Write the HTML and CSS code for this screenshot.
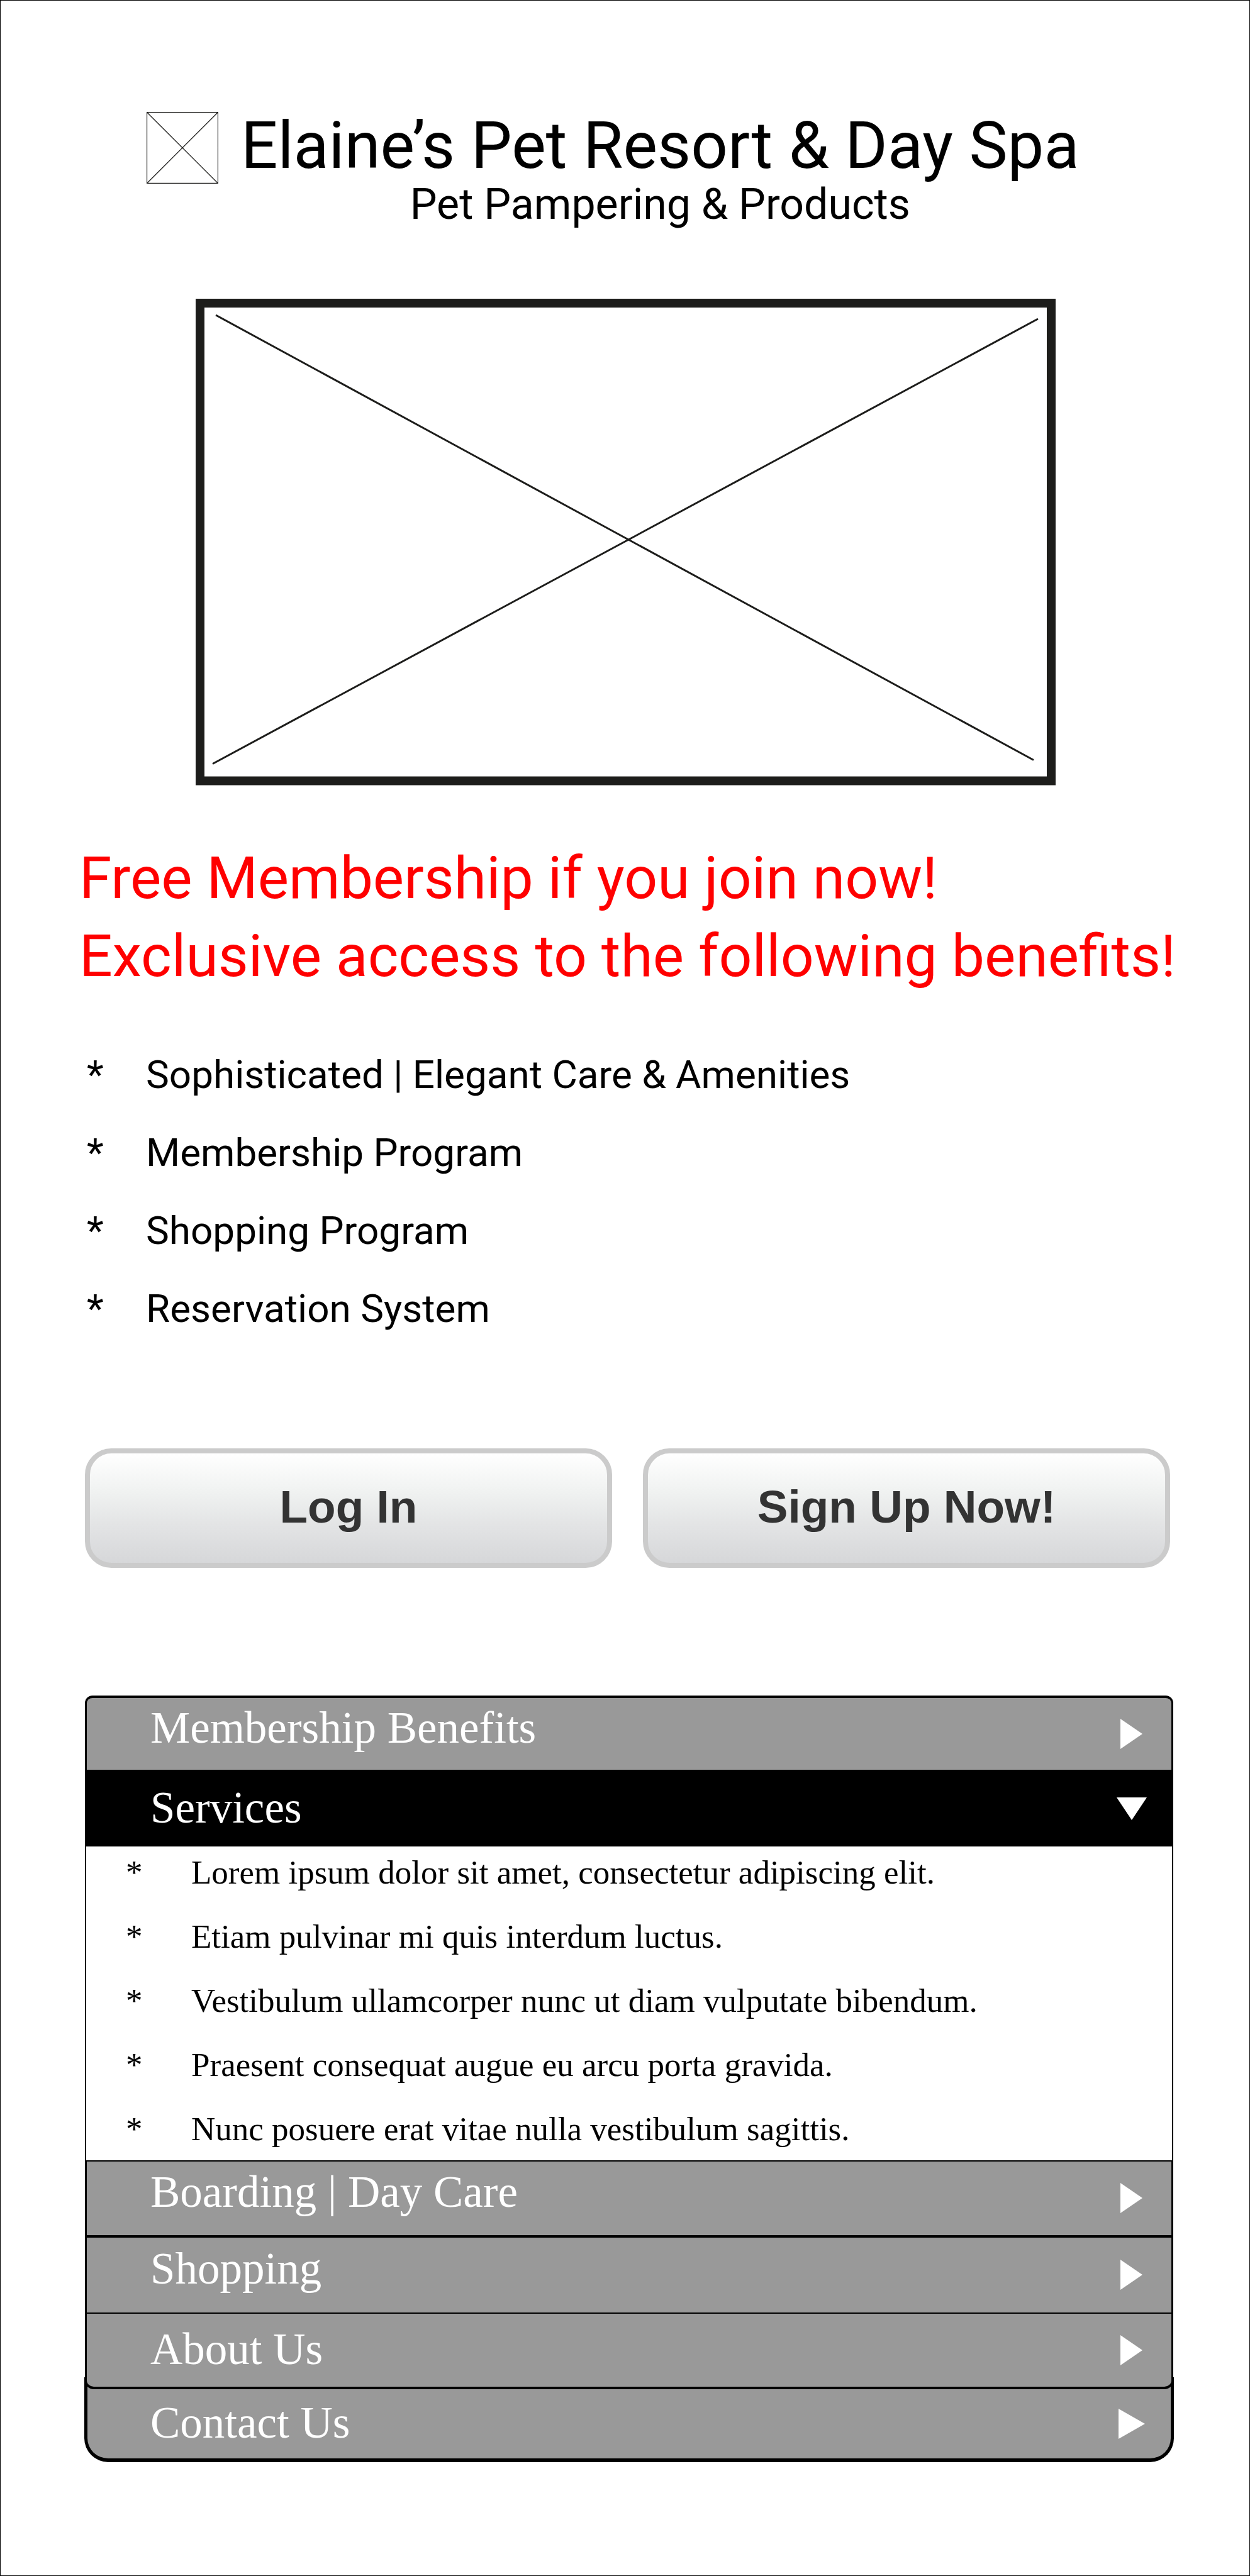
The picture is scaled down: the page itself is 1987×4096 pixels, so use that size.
FILE: index.html
```html
<!DOCTYPE html>
<html lang="en">
<head>
<meta charset="utf-8">
<meta name="viewport" content="width=device-width, initial-scale=1">
<title>Elaine’s Pet Resort &amp; Day Spa</title>
<link rel="stylesheet" href="styles.css">
</head>
<body>
<div class="page">
  <header class="masthead">
    <svg class="logo" viewBox="0 0 114 114" role="img" aria-label="Logo placeholder">
      <path d="M.5 .5H113.500V113.500H.5ZM.5 .5L113.500 113.500M113.500 .5L.5 113.500" fill="none" stroke="#1d1d1b" stroke-width="1.300"/>
    </svg>
    <div class="brand">
      <h1 class="brand-name">Elaine’s Pet Resort &amp; Day Spa</h1>
      <p class="brand-tag">Pet Pampering &amp; Products</p>
    </div>
  </header>

  <main>
    <svg class="hero" viewBox="0 0 1366 773" role="img" aria-label="Image placeholder">
      <rect x="7" y="7" width="1352" height="759" fill="none" stroke="#1d1d1b" stroke-width="14"/>
      <path d="M32 26L1331 733M1338 32L27 739" fill="none" stroke="#1d1d1b" stroke-width="3"/>
    </svg>

    <h2 class="offer">Free Membership if you join now!<br>Exclusive access to the following benefits!</h2>

    <ul class="benefits">
      <li><span class="star">*</span><span>Sophisticated | Elegant Care &amp; Amenities</span></li>
      <li><span class="star">*</span><span>Membership Program</span></li>
      <li><span class="star">*</span><span>Shopping Program</span></li>
      <li><span class="star">*</span><span>Reservation System</span></li>
    </ul>

    <div class="actions">
      <button class="action" type="button">Log In</button>
      <button class="action" type="button">Sign Up Now!</button>
    </div>

    <nav class="accordion" aria-label="Site sections">
      <button class="tab tab-first" type="button" aria-expanded="false">
        <span class="label label-high">Membership Benefits</span>
        <svg class="arrow" viewBox="0 0 48 48" aria-hidden="true"><path d="M6 0L41 24L6 48Z"/></svg>
      </button>
      <button class="tab tab-open" type="button" aria-expanded="true" aria-controls="services">
        <span class="label">Services</span>
        <svg class="arrow" viewBox="0 0 48 48" aria-hidden="true"><path d="M0 6H48L24 42Z"/></svg>
      </button>
      <ul class="panel" id="services">
        <li><span class="star">*</span><span>Lorem ipsum dolor sit amet, consectetur adipiscing elit.</span></li>
        <li><span class="star">*</span><span>Etiam pulvinar mi quis interdum luctus.</span></li>
        <li><span class="star">*</span><span>Vestibulum ullamcorper nunc ut diam vulputate bibendum.</span></li>
        <li><span class="star">*</span><span>Praesent consequat augue eu arcu porta gravida.</span></li>
        <li><span class="star">*</span><span>Nunc posuere erat vitae nulla vestibulum sagittis.</span></li>
      </ul>
      <button class="tab" type="button" aria-expanded="false">
        <span class="label label-high">Boarding | Day Care</span>
        <svg class="arrow" viewBox="0 0 48 48" aria-hidden="true"><path d="M6 0L41 24L6 48Z"/></svg>
      </button>
      <button class="tab tab-ruled" type="button" aria-expanded="false">
        <span class="label label-high">Shopping</span>
        <svg class="arrow" viewBox="0 0 48 48" aria-hidden="true"><path d="M6 0L41 24L6 48Z"/></svg>
      </button>
      <button class="tab tab-rounded" type="button" aria-expanded="false">
        <span class="label">About Us</span>
        <svg class="arrow" viewBox="0 0 48 48" aria-hidden="true"><path d="M6 0L41 24L6 48Z"/></svg>
      </button>
      <button class="tab tab-last" type="button" aria-expanded="false">
        <span class="label">Contact Us</span>
        <svg class="arrow" viewBox="0 0 48 48" aria-hidden="true"><path d="M3 0L45 24L3 48Z"/></svg>
      </button>
    </nav>
  </main>
</div>
</body>
</html>
```
FILE: styles.css
```css
* {
  box-sizing: border-box;
}

body {
  margin: 0;
  background: #fff;
  color: #000;
  font-family: Roboto, sans-serif;
}

h1,
h2,
p,
ul {
  margin: 0;
  padding: 0;
  font-weight: 400;
  list-style: none;
}

button {
  margin: 0;
  cursor: pointer;
}

.page {
  min-height: 100vh;
  padding: 175px 120px 100px 134px;
  border: 1px solid #000;
}

/* Header */
.masthead {
  display: flex;
  align-items: flex-start;
  gap: 36px;
  padding-left: 98px;
}

.logo {
  flex: none;
  width: 114px;
  height: 114px;
  margin-top: 2px;
}

.brand {
  text-align: center;
}

.brand-name {
  font-size: 103px;
  line-height: 112px;
}

.brand-tag {
  font-size: 68px;
  line-height: 74px;
}

/* Promotion */
.hero {
  display: block;
  width: calc(100% - 364px);
  height: auto;
  margin: 113px 0 0 176px;
}

.offer {
  margin: 86px -12px 0 -9px;
  color: #f00;
  font-size: 93px;
  line-height: 124px;
}

.benefits {
  margin-top: 64px;
  font-size: 62px;
  line-height: 124px;
}

.benefits li {
  display: flex;
  padding-left: 3px;
}

.benefits .star {
  flex: none;
  width: 94px;
}

/* Buttons */
.actions {
  display: grid;
  grid-template-columns: 1fr 1fr;
  gap: 49px;
  margin: 160px 6px 0 0;
}

.action {
  height: 190px;
  padding: 0 0 4px;
  border: 8px solid #cbcbcb;
  border-radius: 42px;
  background: linear-gradient(#fff, #f0f2f1 35%, #e3e4e5 65%, #d6d7d9);
  color: #333;
  font: 700 73px "Liberation Sans", Arial, sans-serif;
}

/* Accordion */
.accordion {
  display: flex;
  flex-direction: column;
  margin: 203px 1px 0 0;
  font-family: "Liberation Serif", "Times New Roman", serif;
}

.tab {
  display: flex;
  align-items: center;
  justify-content: space-between;
  height: 119px;
  padding: 0 39px 0 101px;
  border: solid #000;
  border-width: 2px 3px 0;
  background: #999;
  color: #fff;
  font: inherit;
  font-size: 71px;
  line-height: 80px;
  text-align: left;
}

.tab-first {
  height: 118px;
  border-top-width: 4px;
  border-radius: 12px 12px 0 0;
}

.tab-open {
  height: 122px;
  background: #000;
}

.tab-ruled {
  height: 123px;
  border-top-width: 4px;
}

.tab-rounded {
  position: relative;
  z-index: 1;
  height: 122px;
  border-bottom-width: 4px;
  border-radius: 0 0 14px 14px;
}

/* Tucked under the rounded corners of the tab above it */
.tab-last {
  height: 135px;
  margin: -19px -1px 0;
  padding: 19px 38px 0 100px;
  border-width: 0 5px 6px;
  border-radius: 0 0 38px 38px;
}

.label {
  padding-bottom: 4px;
}

.label-high {
  padding-bottom: 20px;
}

.arrow {
  flex: none;
  width: 48px;
  height: 48px;
  fill: #fff;
}

.panel {
  display: flex;
  flex-direction: column;
  gap: 22px;
  padding: 1px 40px 10px 63px;
  border: solid #000;
  border-width: 0 2px;
  font-size: 53px;
  line-height: 80px;
}

.panel li {
  display: flex;
}

.panel .star {
  flex: none;
  width: 104px;
}
```
